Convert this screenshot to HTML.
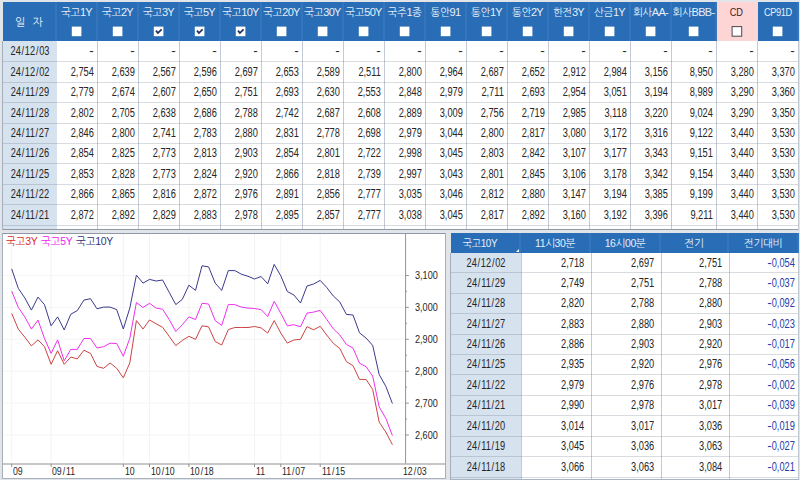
<!DOCTYPE html>
<html lang="ko"><head><meta charset="utf-8"><title>채권 수익률</title>
<style>
html,body{margin:0;padding:0}
body{width:800px;height:480px;overflow:hidden;position:relative;background:#e1e4e8;font-family:"Liberation Sans","NanumGothic","Noto Sans CJK KR",sans-serif;font-size:10.5px;color:#262626}
.abs{position:absolute}
.t1{position:absolute;left:3px;top:2px;width:796px;height:227px;background:#fff;overflow:hidden}
.hd{position:absolute;top:0;height:39px;background:#286db5;color:#e6effa;text-align:center;box-sizing:border-box;border-right:2px solid #3475bb}
.hd .nm{position:absolute;left:-10px;right:-10px;top:4px;line-height:12px;white-space:nowrap;letter-spacing:-0.4px}
.cb{position:absolute;left:0;top:0}
.c{position:absolute;height:20px;line-height:20px;text-align:right;box-sizing:border-box;padding-right:5.6px;white-space:nowrap;font-size:12.5px;transform:scaleX(.74);transform-origin:100% 50%}
.d{position:absolute;height:20px;line-height:20px;text-align:center;white-space:nowrap;font-size:12.5px;transform:scaleX(.74);transform-origin:50% 50%}
.ds{display:inline-block;transform:scaleX(1.45);transform-origin:100% 50%}
.lat{display:inline-block;transform:scaleX(.88)}
.lt{font-size:11px;letter-spacing:-0.7px}
.ax{position:absolute;line-height:12px;font-size:11.5px;white-space:nowrap;transform:scaleX(.76);transform-origin:0 50%}
.sl{margin:0 1.2px}
.d .sl{margin:0 1px}
.vl{position:absolute;width:1px;background:#c3cad6}
.hl{position:absolute;height:1px;background:rgba(100,110,130,.25)}
.neg{color:#2a3aa8}
</style></head><body>

<div class="t1">
<div class="abs" style="left:0;top:39px;width:54px;height:190px;background:#d6e2ee"></div>
<div class="hd" style="left:0;width:54px"><div class="nm" style="top:14px;letter-spacing:0.3px;font-size:11px">일&nbsp; 자</div></div>
<div class="hd" style="left:54px;width:41px"><div class="nm">국고<span class="lt">1Y</span></div>
<svg class="cb" width="41" height="39" viewBox="0 0 41 39">
<rect x="14.8" y="24.6" width="9.6" height="9.6" fill="#fff"/>
</svg>
</div>
<div class="hd" style="left:95px;width:41px"><div class="nm">국고<span class="lt">2Y</span></div>
<svg class="cb" width="41" height="39" viewBox="0 0 41 39">
<rect x="14.8" y="24.6" width="9.6" height="9.6" fill="#fff"/>
</svg>
</div>
<div class="hd" style="left:136px;width:41px"><div class="nm">국고<span class="lt">3Y</span></div>
<svg class="cb" width="41" height="39" viewBox="0 0 41 39">
<rect x="14.8" y="24.6" width="9.6" height="9.6" fill="#fff"/>
<polyline points="17.0,28.6 18.9,31.0 22.6,27.3" fill="none" stroke="#1c2f5c" stroke-width="1.7"/>
</svg>
</div>
<div class="hd" style="left:177px;width:41px"><div class="nm">국고<span class="lt">5Y</span></div>
<svg class="cb" width="41" height="39" viewBox="0 0 41 39">
<rect x="14.8" y="24.6" width="9.6" height="9.6" fill="#fff"/>
<polyline points="17.0,28.6 18.9,31.0 22.6,27.3" fill="none" stroke="#1c2f5c" stroke-width="1.7"/>
</svg>
</div>
<div class="hd" style="left:218px;width:41px"><div class="nm">국고<span class="lt">10Y</span></div>
<svg class="cb" width="41" height="39" viewBox="0 0 41 39">
<rect x="14.8" y="24.6" width="9.6" height="9.6" fill="#fff"/>
<polyline points="17.0,28.6 18.9,31.0 22.6,27.3" fill="none" stroke="#1c2f5c" stroke-width="1.7"/>
</svg>
</div>
<div class="hd" style="left:259px;width:41px"><div class="nm">국고<span class="lt">20Y</span></div>
<svg class="cb" width="41" height="39" viewBox="0 0 41 39">
<rect x="14.8" y="24.6" width="9.6" height="9.6" fill="#fff"/>
</svg>
</div>
<div class="hd" style="left:300px;width:41px"><div class="nm">국고<span class="lt">30Y</span></div>
<svg class="cb" width="41" height="39" viewBox="0 0 41 39">
<rect x="14.8" y="24.6" width="9.6" height="9.6" fill="#fff"/>
</svg>
</div>
<div class="hd" style="left:341px;width:41px"><div class="nm">국고<span class="lt">50Y</span></div>
<svg class="cb" width="41" height="39" viewBox="0 0 41 39">
<rect x="14.8" y="24.6" width="9.6" height="9.6" fill="#fff"/>
</svg>
</div>
<div class="hd" style="left:382px;width:41px"><div class="nm">국주<span class="lt">1</span>종</div>
<svg class="cb" width="41" height="39" viewBox="0 0 41 39">
<rect x="14.8" y="24.6" width="9.6" height="9.6" fill="#fff"/>
</svg>
</div>
<div class="hd" style="left:423px;width:41px"><div class="nm">통안<span class="lt">91</span></div>
<svg class="cb" width="41" height="39" viewBox="0 0 41 39">
<rect x="14.8" y="24.6" width="9.6" height="9.6" fill="#fff"/>
</svg>
</div>
<div class="hd" style="left:464px;width:41px"><div class="nm">통안<span class="lt">1Y</span></div>
<svg class="cb" width="41" height="39" viewBox="0 0 41 39">
<rect x="14.8" y="24.6" width="9.6" height="9.6" fill="#fff"/>
</svg>
</div>
<div class="hd" style="left:505px;width:41px"><div class="nm">통안<span class="lt">2Y</span></div>
<svg class="cb" width="41" height="39" viewBox="0 0 41 39">
<rect x="14.8" y="24.6" width="9.6" height="9.6" fill="#fff"/>
</svg>
</div>
<div class="hd" style="left:546px;width:41px"><div class="nm">한전<span class="lt">3Y</span></div>
<svg class="cb" width="41" height="39" viewBox="0 0 41 39">
<rect x="14.8" y="24.6" width="9.6" height="9.6" fill="#fff"/>
</svg>
</div>
<div class="hd" style="left:587px;width:41px"><div class="nm">산금<span class="lt">1Y</span></div>
<svg class="cb" width="41" height="39" viewBox="0 0 41 39">
<rect x="14.8" y="24.6" width="9.6" height="9.6" fill="#fff"/>
</svg>
</div>
<div class="hd" style="left:628px;width:41px"><div class="nm">회사<span class="lt">AA-</span></div>
<svg class="cb" width="41" height="39" viewBox="0 0 41 39">
<rect x="14.8" y="24.6" width="9.6" height="9.6" fill="#fff"/>
</svg>
</div>
<div class="hd" style="left:669px;width:45px"><div class="nm">회사<span class="lt">BBB-</span></div>
<svg class="cb" width="45" height="39" viewBox="0 0 45 39">
<rect x="16.8" y="24.6" width="9.6" height="9.6" fill="#fff"/>
</svg>
</div>
<div class="hd" style="left:714px;width:41px;background:#fdd5d5;color:#4a2222;border-right-color:#fdd5d5"><div class="nm"><span class="lat">CD</span></div>
<svg class="cb" width="41" height="39" viewBox="0 0 41 39">
<rect x="15.1" y="24.6" width="9.6" height="9.6" fill="#fff" stroke="#48484e" stroke-width="1"/>
</svg>
</div>
<div class="hd" style="left:755px;width:41px"><div class="nm"><span class="lat">CP91D</span></div>
<svg class="cb" width="41" height="39" viewBox="0 0 41 39">
<rect x="14.8" y="24.6" width="9.6" height="9.6" fill="#fff"/>
</svg>
</div>
<div class="d" style="left:0;top:39px;width:54px;height:20px;line-height:21.5px">24<span class="sl">/</span>12<span class="sl">/</span>03</div>
<div class="c" style="left:54px;top:39px;width:41px;height:20px;line-height:21.5px"><span class="ds">-</span></div>
<div class="c" style="left:95px;top:39px;width:41px;height:20px;line-height:21.5px"><span class="ds">-</span></div>
<div class="c" style="left:136px;top:39px;width:41px;height:20px;line-height:21.5px"><span class="ds">-</span></div>
<div class="c" style="left:177px;top:39px;width:41px;height:20px;line-height:21.5px"><span class="ds">-</span></div>
<div class="c" style="left:218px;top:39px;width:41px;height:20px;line-height:21.5px"><span class="ds">-</span></div>
<div class="c" style="left:259px;top:39px;width:41px;height:20px;line-height:21.5px"><span class="ds">-</span></div>
<div class="c" style="left:300px;top:39px;width:41px;height:20px;line-height:21.5px"><span class="ds">-</span></div>
<div class="c" style="left:341px;top:39px;width:41px;height:20px;line-height:21.5px"><span class="ds">-</span></div>
<div class="c" style="left:382px;top:39px;width:41px;height:20px;line-height:21.5px"><span class="ds">-</span></div>
<div class="c" style="left:423px;top:39px;width:41px;height:20px;line-height:21.5px"><span class="ds">-</span></div>
<div class="c" style="left:464px;top:39px;width:41px;height:20px;line-height:21.5px"><span class="ds">-</span></div>
<div class="c" style="left:505px;top:39px;width:41px;height:20px;line-height:21.5px"><span class="ds">-</span></div>
<div class="c" style="left:546px;top:39px;width:41px;height:20px;line-height:21.5px"><span class="ds">-</span></div>
<div class="c" style="left:587px;top:39px;width:41px;height:20px;line-height:21.5px"><span class="ds">-</span></div>
<div class="c" style="left:628px;top:39px;width:41px;height:20px;line-height:21.5px"><span class="ds">-</span></div>
<div class="c" style="left:669px;top:39px;width:45px;height:20px;line-height:21.5px"><span class="ds">-</span></div>
<div class="c" style="left:714px;top:39px;width:41px;height:20px;line-height:21.5px"><span class="ds">-</span></div>
<div class="c" style="left:755px;top:39px;width:41px;height:20px;line-height:21.5px"><span class="ds">-</span></div>
<div class="d" style="left:0;top:59px;width:54px;height:21px;line-height:22.5px">24<span class="sl">/</span>12<span class="sl">/</span>02</div>
<div class="c" style="left:54px;top:59px;width:41px;height:21px;line-height:22.5px">2,754</div>
<div class="c" style="left:95px;top:59px;width:41px;height:21px;line-height:22.5px">2,639</div>
<div class="c" style="left:136px;top:59px;width:41px;height:21px;line-height:22.5px">2,567</div>
<div class="c" style="left:177px;top:59px;width:41px;height:21px;line-height:22.5px">2,596</div>
<div class="c" style="left:218px;top:59px;width:41px;height:21px;line-height:22.5px">2,697</div>
<div class="c" style="left:259px;top:59px;width:41px;height:21px;line-height:22.5px">2,653</div>
<div class="c" style="left:300px;top:59px;width:41px;height:21px;line-height:22.5px">2,589</div>
<div class="c" style="left:341px;top:59px;width:41px;height:21px;line-height:22.5px">2,511</div>
<div class="c" style="left:382px;top:59px;width:41px;height:21px;line-height:22.5px">2,800</div>
<div class="c" style="left:423px;top:59px;width:41px;height:21px;line-height:22.5px">2,964</div>
<div class="c" style="left:464px;top:59px;width:41px;height:21px;line-height:22.5px">2,687</div>
<div class="c" style="left:505px;top:59px;width:41px;height:21px;line-height:22.5px">2,652</div>
<div class="c" style="left:546px;top:59px;width:41px;height:21px;line-height:22.5px">2,912</div>
<div class="c" style="left:587px;top:59px;width:41px;height:21px;line-height:22.5px">2,984</div>
<div class="c" style="left:628px;top:59px;width:41px;height:21px;line-height:22.5px">3,156</div>
<div class="c" style="left:669px;top:59px;width:45px;height:21px;line-height:22.5px">8,950</div>
<div class="c" style="left:714px;top:59px;width:41px;height:21px;line-height:22.5px">3,280</div>
<div class="c" style="left:755px;top:59px;width:41px;height:21px;line-height:22.5px">3,370</div>
<div class="d" style="left:0;top:80px;width:54px;height:20px;line-height:21.5px">24<span class="sl">/</span>11<span class="sl">/</span>29</div>
<div class="c" style="left:54px;top:80px;width:41px;height:20px;line-height:21.5px">2,779</div>
<div class="c" style="left:95px;top:80px;width:41px;height:20px;line-height:21.5px">2,674</div>
<div class="c" style="left:136px;top:80px;width:41px;height:20px;line-height:21.5px">2,607</div>
<div class="c" style="left:177px;top:80px;width:41px;height:20px;line-height:21.5px">2,650</div>
<div class="c" style="left:218px;top:80px;width:41px;height:20px;line-height:21.5px">2,751</div>
<div class="c" style="left:259px;top:80px;width:41px;height:20px;line-height:21.5px">2,693</div>
<div class="c" style="left:300px;top:80px;width:41px;height:20px;line-height:21.5px">2,630</div>
<div class="c" style="left:341px;top:80px;width:41px;height:20px;line-height:21.5px">2,553</div>
<div class="c" style="left:382px;top:80px;width:41px;height:20px;line-height:21.5px">2,848</div>
<div class="c" style="left:423px;top:80px;width:41px;height:20px;line-height:21.5px">2,979</div>
<div class="c" style="left:464px;top:80px;width:41px;height:20px;line-height:21.5px">2,711</div>
<div class="c" style="left:505px;top:80px;width:41px;height:20px;line-height:21.5px">2,693</div>
<div class="c" style="left:546px;top:80px;width:41px;height:20px;line-height:21.5px">2,954</div>
<div class="c" style="left:587px;top:80px;width:41px;height:20px;line-height:21.5px">3,051</div>
<div class="c" style="left:628px;top:80px;width:41px;height:20px;line-height:21.5px">3,194</div>
<div class="c" style="left:669px;top:80px;width:45px;height:20px;line-height:21.5px">8,989</div>
<div class="c" style="left:714px;top:80px;width:41px;height:20px;line-height:21.5px">3,290</div>
<div class="c" style="left:755px;top:80px;width:41px;height:20px;line-height:21.5px">3,360</div>
<div class="d" style="left:0;top:100px;width:54px;height:21px;line-height:22.5px">24<span class="sl">/</span>11<span class="sl">/</span>28</div>
<div class="c" style="left:54px;top:100px;width:41px;height:21px;line-height:22.5px">2,802</div>
<div class="c" style="left:95px;top:100px;width:41px;height:21px;line-height:22.5px">2,705</div>
<div class="c" style="left:136px;top:100px;width:41px;height:21px;line-height:22.5px">2,638</div>
<div class="c" style="left:177px;top:100px;width:41px;height:21px;line-height:22.5px">2,686</div>
<div class="c" style="left:218px;top:100px;width:41px;height:21px;line-height:22.5px">2,788</div>
<div class="c" style="left:259px;top:100px;width:41px;height:21px;line-height:22.5px">2,742</div>
<div class="c" style="left:300px;top:100px;width:41px;height:21px;line-height:22.5px">2,687</div>
<div class="c" style="left:341px;top:100px;width:41px;height:21px;line-height:22.5px">2,608</div>
<div class="c" style="left:382px;top:100px;width:41px;height:21px;line-height:22.5px">2,889</div>
<div class="c" style="left:423px;top:100px;width:41px;height:21px;line-height:22.5px">3,009</div>
<div class="c" style="left:464px;top:100px;width:41px;height:21px;line-height:22.5px">2,756</div>
<div class="c" style="left:505px;top:100px;width:41px;height:21px;line-height:22.5px">2,719</div>
<div class="c" style="left:546px;top:100px;width:41px;height:21px;line-height:22.5px">2,985</div>
<div class="c" style="left:587px;top:100px;width:41px;height:21px;line-height:22.5px">3,118</div>
<div class="c" style="left:628px;top:100px;width:41px;height:21px;line-height:22.5px">3,220</div>
<div class="c" style="left:669px;top:100px;width:45px;height:21px;line-height:22.5px">9,024</div>
<div class="c" style="left:714px;top:100px;width:41px;height:21px;line-height:22.5px">3,290</div>
<div class="c" style="left:755px;top:100px;width:41px;height:21px;line-height:22.5px">3,350</div>
<div class="d" style="left:0;top:121px;width:54px;height:20px;line-height:21.5px">24<span class="sl">/</span>11<span class="sl">/</span>27</div>
<div class="c" style="left:54px;top:121px;width:41px;height:20px;line-height:21.5px">2,846</div>
<div class="c" style="left:95px;top:121px;width:41px;height:20px;line-height:21.5px">2,800</div>
<div class="c" style="left:136px;top:121px;width:41px;height:20px;line-height:21.5px">2,741</div>
<div class="c" style="left:177px;top:121px;width:41px;height:20px;line-height:21.5px">2,783</div>
<div class="c" style="left:218px;top:121px;width:41px;height:20px;line-height:21.5px">2,880</div>
<div class="c" style="left:259px;top:121px;width:41px;height:20px;line-height:21.5px">2,831</div>
<div class="c" style="left:300px;top:121px;width:41px;height:20px;line-height:21.5px">2,778</div>
<div class="c" style="left:341px;top:121px;width:41px;height:20px;line-height:21.5px">2,698</div>
<div class="c" style="left:382px;top:121px;width:41px;height:20px;line-height:21.5px">2,979</div>
<div class="c" style="left:423px;top:121px;width:41px;height:20px;line-height:21.5px">3,044</div>
<div class="c" style="left:464px;top:121px;width:41px;height:20px;line-height:21.5px">2,800</div>
<div class="c" style="left:505px;top:121px;width:41px;height:20px;line-height:21.5px">2,817</div>
<div class="c" style="left:546px;top:121px;width:41px;height:20px;line-height:21.5px">3,080</div>
<div class="c" style="left:587px;top:121px;width:41px;height:20px;line-height:21.5px">3,172</div>
<div class="c" style="left:628px;top:121px;width:41px;height:20px;line-height:21.5px">3,316</div>
<div class="c" style="left:669px;top:121px;width:45px;height:20px;line-height:21.5px">9,122</div>
<div class="c" style="left:714px;top:121px;width:41px;height:20px;line-height:21.5px">3,440</div>
<div class="c" style="left:755px;top:121px;width:41px;height:20px;line-height:21.5px">3,530</div>
<div class="d" style="left:0;top:141px;width:54px;height:20px;line-height:21.5px">24<span class="sl">/</span>11<span class="sl">/</span>26</div>
<div class="c" style="left:54px;top:141px;width:41px;height:20px;line-height:21.5px">2,854</div>
<div class="c" style="left:95px;top:141px;width:41px;height:20px;line-height:21.5px">2,825</div>
<div class="c" style="left:136px;top:141px;width:41px;height:20px;line-height:21.5px">2,773</div>
<div class="c" style="left:177px;top:141px;width:41px;height:20px;line-height:21.5px">2,813</div>
<div class="c" style="left:218px;top:141px;width:41px;height:20px;line-height:21.5px">2,903</div>
<div class="c" style="left:259px;top:141px;width:41px;height:20px;line-height:21.5px">2,854</div>
<div class="c" style="left:300px;top:141px;width:41px;height:20px;line-height:21.5px">2,801</div>
<div class="c" style="left:341px;top:141px;width:41px;height:20px;line-height:21.5px">2,722</div>
<div class="c" style="left:382px;top:141px;width:41px;height:20px;line-height:21.5px">2,998</div>
<div class="c" style="left:423px;top:141px;width:41px;height:20px;line-height:21.5px">3,045</div>
<div class="c" style="left:464px;top:141px;width:41px;height:20px;line-height:21.5px">2,803</div>
<div class="c" style="left:505px;top:141px;width:41px;height:20px;line-height:21.5px">2,842</div>
<div class="c" style="left:546px;top:141px;width:41px;height:20px;line-height:21.5px">3,107</div>
<div class="c" style="left:587px;top:141px;width:41px;height:20px;line-height:21.5px">3,177</div>
<div class="c" style="left:628px;top:141px;width:41px;height:20px;line-height:21.5px">3,343</div>
<div class="c" style="left:669px;top:141px;width:45px;height:20px;line-height:21.5px">9,151</div>
<div class="c" style="left:714px;top:141px;width:41px;height:20px;line-height:21.5px">3,440</div>
<div class="c" style="left:755px;top:141px;width:41px;height:20px;line-height:21.5px">3,530</div>
<div class="d" style="left:0;top:161px;width:54px;height:21px;line-height:22.5px">24<span class="sl">/</span>11<span class="sl">/</span>25</div>
<div class="c" style="left:54px;top:161px;width:41px;height:21px;line-height:22.5px">2,853</div>
<div class="c" style="left:95px;top:161px;width:41px;height:21px;line-height:22.5px">2,828</div>
<div class="c" style="left:136px;top:161px;width:41px;height:21px;line-height:22.5px">2,773</div>
<div class="c" style="left:177px;top:161px;width:41px;height:21px;line-height:22.5px">2,824</div>
<div class="c" style="left:218px;top:161px;width:41px;height:21px;line-height:22.5px">2,920</div>
<div class="c" style="left:259px;top:161px;width:41px;height:21px;line-height:22.5px">2,866</div>
<div class="c" style="left:300px;top:161px;width:41px;height:21px;line-height:22.5px">2,818</div>
<div class="c" style="left:341px;top:161px;width:41px;height:21px;line-height:22.5px">2,739</div>
<div class="c" style="left:382px;top:161px;width:41px;height:21px;line-height:22.5px">2,997</div>
<div class="c" style="left:423px;top:161px;width:41px;height:21px;line-height:22.5px">3,043</div>
<div class="c" style="left:464px;top:161px;width:41px;height:21px;line-height:22.5px">2,801</div>
<div class="c" style="left:505px;top:161px;width:41px;height:21px;line-height:22.5px">2,845</div>
<div class="c" style="left:546px;top:161px;width:41px;height:21px;line-height:22.5px">3,106</div>
<div class="c" style="left:587px;top:161px;width:41px;height:21px;line-height:22.5px">3,178</div>
<div class="c" style="left:628px;top:161px;width:41px;height:21px;line-height:22.5px">3,342</div>
<div class="c" style="left:669px;top:161px;width:45px;height:21px;line-height:22.5px">9,154</div>
<div class="c" style="left:714px;top:161px;width:41px;height:21px;line-height:22.5px">3,440</div>
<div class="c" style="left:755px;top:161px;width:41px;height:21px;line-height:22.5px">3,530</div>
<div class="d" style="left:0;top:182px;width:54px;height:20px;line-height:21.5px">24<span class="sl">/</span>11<span class="sl">/</span>22</div>
<div class="c" style="left:54px;top:182px;width:41px;height:20px;line-height:21.5px">2,866</div>
<div class="c" style="left:95px;top:182px;width:41px;height:20px;line-height:21.5px">2,865</div>
<div class="c" style="left:136px;top:182px;width:41px;height:20px;line-height:21.5px">2,816</div>
<div class="c" style="left:177px;top:182px;width:41px;height:20px;line-height:21.5px">2,872</div>
<div class="c" style="left:218px;top:182px;width:41px;height:20px;line-height:21.5px">2,976</div>
<div class="c" style="left:259px;top:182px;width:41px;height:20px;line-height:21.5px">2,891</div>
<div class="c" style="left:300px;top:182px;width:41px;height:20px;line-height:21.5px">2,856</div>
<div class="c" style="left:341px;top:182px;width:41px;height:20px;line-height:21.5px">2,777</div>
<div class="c" style="left:382px;top:182px;width:41px;height:20px;line-height:21.5px">3,035</div>
<div class="c" style="left:423px;top:182px;width:41px;height:20px;line-height:21.5px">3,046</div>
<div class="c" style="left:464px;top:182px;width:41px;height:20px;line-height:21.5px">2,812</div>
<div class="c" style="left:505px;top:182px;width:41px;height:20px;line-height:21.5px">2,880</div>
<div class="c" style="left:546px;top:182px;width:41px;height:20px;line-height:21.5px">3,147</div>
<div class="c" style="left:587px;top:182px;width:41px;height:20px;line-height:21.5px">3,194</div>
<div class="c" style="left:628px;top:182px;width:41px;height:20px;line-height:21.5px">3,385</div>
<div class="c" style="left:669px;top:182px;width:45px;height:20px;line-height:21.5px">9,199</div>
<div class="c" style="left:714px;top:182px;width:41px;height:20px;line-height:21.5px">3,440</div>
<div class="c" style="left:755px;top:182px;width:41px;height:20px;line-height:21.5px">3,530</div>
<div class="d" style="left:0;top:202px;width:54px;height:21px;line-height:22.5px">24<span class="sl">/</span>11<span class="sl">/</span>21</div>
<div class="c" style="left:54px;top:202px;width:41px;height:21px;line-height:22.5px">2,872</div>
<div class="c" style="left:95px;top:202px;width:41px;height:21px;line-height:22.5px">2,892</div>
<div class="c" style="left:136px;top:202px;width:41px;height:21px;line-height:22.5px">2,829</div>
<div class="c" style="left:177px;top:202px;width:41px;height:21px;line-height:22.5px">2,883</div>
<div class="c" style="left:218px;top:202px;width:41px;height:21px;line-height:22.5px">2,978</div>
<div class="c" style="left:259px;top:202px;width:41px;height:21px;line-height:22.5px">2,895</div>
<div class="c" style="left:300px;top:202px;width:41px;height:21px;line-height:22.5px">2,857</div>
<div class="c" style="left:341px;top:202px;width:41px;height:21px;line-height:22.5px">2,777</div>
<div class="c" style="left:382px;top:202px;width:41px;height:21px;line-height:22.5px">3,038</div>
<div class="c" style="left:423px;top:202px;width:41px;height:21px;line-height:22.5px">3,045</div>
<div class="c" style="left:464px;top:202px;width:41px;height:21px;line-height:22.5px">2,817</div>
<div class="c" style="left:505px;top:202px;width:41px;height:21px;line-height:22.5px">2,892</div>
<div class="c" style="left:546px;top:202px;width:41px;height:21px;line-height:22.5px">3,160</div>
<div class="c" style="left:587px;top:202px;width:41px;height:21px;line-height:22.5px">3,192</div>
<div class="c" style="left:628px;top:202px;width:41px;height:21px;line-height:22.5px">3,396</div>
<div class="c" style="left:669px;top:202px;width:45px;height:21px;line-height:22.5px">9,211</div>
<div class="c" style="left:714px;top:202px;width:41px;height:21px;line-height:22.5px">3,440</div>
<div class="c" style="left:755px;top:202px;width:41px;height:21px;line-height:22.5px">3,530</div>
<div class="vl" style="left:94px;top:39px;height:190px"></div>
<div class="vl" style="left:135px;top:39px;height:190px"></div>
<div class="vl" style="left:176px;top:39px;height:190px"></div>
<div class="vl" style="left:217px;top:39px;height:190px"></div>
<div class="vl" style="left:258px;top:39px;height:190px"></div>
<div class="vl" style="left:299px;top:39px;height:190px"></div>
<div class="vl" style="left:340px;top:39px;height:190px"></div>
<div class="vl" style="left:381px;top:39px;height:190px"></div>
<div class="vl" style="left:422px;top:39px;height:190px"></div>
<div class="vl" style="left:463px;top:39px;height:190px"></div>
<div class="vl" style="left:504px;top:39px;height:190px"></div>
<div class="vl" style="left:545px;top:39px;height:190px"></div>
<div class="vl" style="left:586px;top:39px;height:190px"></div>
<div class="vl" style="left:627px;top:39px;height:190px"></div>
<div class="vl" style="left:668px;top:39px;height:190px"></div>
<div class="vl" style="left:713px;top:39px;height:190px"></div>
<div class="vl" style="left:754px;top:39px;height:190px"></div>
<div class="hl" style="left:0;top:59px;width:796px"></div>
<div class="hl" style="left:0;top:80px;width:796px"></div>
<div class="hl" style="left:0;top:100px;width:796px"></div>
<div class="hl" style="left:0;top:121px;width:796px"></div>
<div class="hl" style="left:0;top:141px;width:796px"></div>
<div class="hl" style="left:0;top:161px;width:796px"></div>
<div class="hl" style="left:0;top:182px;width:796px"></div>
<div class="hl" style="left:0;top:202px;width:796px"></div>
<div class="hl" style="left:0;top:223px;width:796px"></div>
<div class="hl" style="left:0;top:243px;width:796px"></div>
</div>
<div class="hl" style="left:2px;top:229px;width:797px;background:#8e98a6"></div>
<div class="vl" style="left:2px;top:41px;height:189px;background:#a2afbe"></div>
<div class="vl" style="left:798px;top:41px;height:189px;background:#c0c8d2"></div>
<div class="abs" style="left:2px;top:233px;width:444px;height:246px;background:#fff;border:1px solid #a6aeb8;border-top-color:#8e98a6;border-right-color:#a8aeb6;border-bottom-color:#a8b2be;box-sizing:border-box"></div>
<svg class="abs" style="left:0;top:0" width="800" height="480" viewBox="0 0 800 480">
<line x1="11.7" y1="234" x2="11.7" y2="463" stroke="#f3f3f3" stroke-width="1"/>
<line x1="51.1" y1="234" x2="51.1" y2="463" stroke="#f3f3f3" stroke-width="1"/>
<line x1="123.3" y1="234" x2="123.3" y2="463" stroke="#f3f3f3" stroke-width="1"/>
<line x1="149.5" y1="234" x2="149.5" y2="463" stroke="#f3f3f3" stroke-width="1"/>
<line x1="188.9" y1="234" x2="188.9" y2="463" stroke="#f3f3f3" stroke-width="1"/>
<line x1="254.5" y1="234" x2="254.5" y2="463" stroke="#f3f3f3" stroke-width="1"/>
<line x1="280.8" y1="234" x2="280.8" y2="463" stroke="#f3f3f3" stroke-width="1"/>
<line x1="320.2" y1="234" x2="320.2" y2="463" stroke="#f3f3f3" stroke-width="1"/>
<line x1="3" y1="275.5" x2="405" y2="275.5" stroke="#f5f5f5" stroke-width="1"/>
<line x1="3" y1="307.4" x2="405" y2="307.4" stroke="#f5f5f5" stroke-width="1"/>
<line x1="3" y1="339.3" x2="405" y2="339.3" stroke="#f5f5f5" stroke-width="1"/>
<line x1="3" y1="371.2" x2="405" y2="371.2" stroke="#f5f5f5" stroke-width="1"/>
<line x1="3" y1="403.1" x2="405" y2="403.1" stroke="#f5f5f5" stroke-width="1"/>
<line x1="3" y1="435.0" x2="405" y2="435.0" stroke="#f5f5f5" stroke-width="1"/>
<line x1="405.6" y1="234" x2="405.6" y2="464" stroke="#929292" stroke-width="1"/>
<line x1="3" y1="464" x2="445" y2="464" stroke="#b4b4b4" stroke-width="1.5"/>
<line x1="405.6" y1="275.5" x2="408.8" y2="275.5" stroke="#929292" stroke-width="1"/>
<line x1="405.6" y1="291.4" x2="407" y2="291.4" stroke="#929292" stroke-width="1"/>
<line x1="405.6" y1="307.4" x2="408.8" y2="307.4" stroke="#929292" stroke-width="1"/>
<line x1="405.6" y1="323.4" x2="407" y2="323.4" stroke="#929292" stroke-width="1"/>
<line x1="405.6" y1="339.3" x2="408.8" y2="339.3" stroke="#929292" stroke-width="1"/>
<line x1="405.6" y1="355.2" x2="407" y2="355.2" stroke="#929292" stroke-width="1"/>
<line x1="405.6" y1="371.2" x2="408.8" y2="371.2" stroke="#929292" stroke-width="1"/>
<line x1="405.6" y1="387.1" x2="407" y2="387.1" stroke="#929292" stroke-width="1"/>
<line x1="405.6" y1="403.1" x2="408.8" y2="403.1" stroke="#929292" stroke-width="1"/>
<line x1="405.6" y1="419.0" x2="407" y2="419.0" stroke="#929292" stroke-width="1"/>
<line x1="405.6" y1="435.0" x2="408.8" y2="435.0" stroke="#929292" stroke-width="1"/>
<line x1="11.7" y1="464" x2="11.7" y2="467" stroke="#929292" stroke-width="1"/>
<line x1="51.1" y1="464" x2="51.1" y2="467" stroke="#929292" stroke-width="1"/>
<line x1="123.3" y1="464" x2="123.3" y2="467" stroke="#929292" stroke-width="1"/>
<line x1="149.5" y1="464" x2="149.5" y2="467" stroke="#929292" stroke-width="1"/>
<line x1="188.9" y1="464" x2="188.9" y2="467" stroke="#929292" stroke-width="1"/>
<line x1="254.5" y1="464" x2="254.5" y2="467" stroke="#929292" stroke-width="1"/>
<line x1="280.8" y1="464" x2="280.8" y2="467" stroke="#929292" stroke-width="1"/>
<line x1="320.2" y1="464" x2="320.2" y2="467" stroke="#929292" stroke-width="1"/>
<polyline points="11.7,313.4 18.3,329.1 24.8,337.2 31.4,345.9 38.0,339.9 44.5,346.7 51.1,364.3 57.6,350.7 64.2,364.3 70.8,357.0 77.3,358.9 83.9,350.2 90.5,353.4 97.0,366.4 103.6,368.3 110.1,362.9 116.7,368.3 123.3,377.8 129.8,362.9 136.4,320.6 143.0,329.0 149.5,320.0 156.1,323.8 162.6,327.3 169.2,336.3 175.8,345.6 182.3,340.4 188.9,336.3 195.5,339.4 202.0,325.8 208.6,326.9 215.2,341.5 221.7,345.0 228.3,329.6 234.8,327.5 241.4,327.5 248.0,327.5 254.5,326.5 261.1,327.9 267.7,333.1 274.2,320.6 280.8,333.1 287.3,343.1 293.9,340.0 300.5,339.3 307.0,326.7 313.6,329.8 320.2,326.3 326.7,335.0 333.3,343.3 339.8,348.5 346.4,361.6 353.0,365.7 359.5,379.4 366.1,379.4 372.7,389.5 379.2,422.2 385.8,432.0 392.4,444.7" fill="none" stroke="#cc4444" stroke-width="1" stroke-linejoin="round"/>
<polyline points="11.7,291.1 18.3,307.4 24.8,316.9 31.4,329.1 38.0,320.1 44.5,338.5 51.1,353.4 57.6,339.9 64.2,360.8 70.8,349.4 77.3,349.4 83.9,338.5 90.5,338.5 97.0,348.0 103.6,346.7 110.1,343.2 116.7,343.5 123.3,356.2 129.8,338.3 136.4,302.5 143.0,307.5 149.5,303.3 156.1,308.1 162.6,309.2 169.2,319.6 175.8,331.5 182.3,324.8 188.9,316.9 195.5,319.6 202.0,303.3 208.6,304.0 215.2,320.6 221.7,325.4 228.3,304.6 234.8,304.6 241.4,307.1 248.0,308.1 254.5,308.5 261.1,309.6 267.7,316.5 274.2,301.3 280.8,313.3 287.3,325.8 293.9,324.7 300.5,326.8 307.0,313.1 313.6,312.1 320.2,310.4 326.7,319.4 333.3,328.8 339.8,335.0 346.4,344.5 353.0,348.0 359.5,363.2 366.1,366.7 372.7,376.2 379.2,406.9 385.8,418.3 392.4,435.5" fill="none" stroke="#ee30ee" stroke-width="1" stroke-linejoin="round"/>
<polyline points="11.7,268.9 18.3,288.4 24.8,297.9 31.4,310.1 38.0,297.1 44.5,304.7 51.1,325.8 57.6,316.9 64.2,329.9 70.8,314.2 77.3,310.6 83.9,300.1 90.5,298.7 97.0,308.8 103.6,307.1 110.1,307.1 116.7,309.6 123.3,329.0 129.8,308.1 136.4,275.2 143.0,283.1 149.5,279.4 156.1,281.0 162.6,280.0 169.2,292.3 175.8,304.6 182.3,299.4 188.9,285.2 195.5,290.4 202.0,265.8 208.6,266.9 215.2,283.1 221.7,290.4 228.3,270.6 234.8,270.6 241.4,274.2 248.0,276.3 254.5,279.0 261.1,276.5 267.7,283.8 274.2,264.4 280.8,275.8 287.3,291.5 293.9,295.0 300.5,303.0 307.0,286.0 313.6,284.0 320.2,280.4 326.7,287.4 333.3,296.0 339.8,302.0 346.4,314.4 353.0,315.0 359.5,332.8 366.1,338.1 372.7,345.4 379.2,374.6 385.8,386.3 392.4,403.5" fill="none" stroke="#3a3a8c" stroke-width="1" stroke-linejoin="round"/>
</svg>
<div class="ax" style="left:13.0px;top:465px">09</div>
<div class="ax" style="left:52.4px;top:465px">09<span class="sl">/</span>11</div>
<div class="ax" style="left:124.6px;top:465px">10</div>
<div class="ax" style="left:150.8px;top:465px">10<span class="sl">/</span>10</div>
<div class="ax" style="left:190.2px;top:465px">10<span class="sl">/</span>18</div>
<div class="ax" style="left:255.8px;top:465px">11</div>
<div class="ax" style="left:282.1px;top:465px">11<span class="sl">/</span>07</div>
<div class="ax" style="left:321.5px;top:465px">11<span class="sl">/</span>15</div>
<div class="ax" style="left:403.0px;top:465px">12<span class="sl">/</span>03</div>
<div class="ax" style="left:415px;top:269.0px;transform:scaleX(.79)">3,100</div>
<div class="ax" style="left:415px;top:300.9px;transform:scaleX(.79)">3,000</div>
<div class="ax" style="left:415px;top:332.8px;transform:scaleX(.79)">2,900</div>
<div class="ax" style="left:415px;top:364.7px;transform:scaleX(.79)">2,800</div>
<div class="ax" style="left:415px;top:396.6px;transform:scaleX(.79)">2,700</div>
<div class="ax" style="left:415px;top:428.5px;transform:scaleX(.79)">2,600</div>
<div class="abs" style="left:6px;top:235px;line-height:12px;letter-spacing:-0.3px;word-spacing:1.2px;white-space:nowrap"><span style="color:#d82a2a">국고3Y</span> <span style="color:#f020f0">국고5Y</span> <span style="color:#30307c">국고10Y</span></div>
<div class="abs" style="left:451px;top:233px;width:348px;height:247px;background:#fff;overflow:hidden">
<div class="abs" style="left:0;top:20px;width:70px;height:230px;background:#d6e2ee"></div>
<div class="hd" style="left:0px;width:70px;height:20px"><div class="nm" style="top:4px;transform:translateX(-5px) scaleX(.95)">국고10Y</div>
<svg class="abs" style="right:0px;bottom:1px" width="3" height="3" viewBox="0 0 3 3"><polygon points="3,0 3,3 0,3" fill="#fff"/></svg>
</div>
<div class="hd" style="left:70px;width:70px;height:20px"><div class="nm" style="top:4px">11시30분</div>
</div>
<div class="hd" style="left:140px;width:70px;height:20px"><div class="nm" style="top:4px">16시00분</div>
</div>
<div class="hd" style="left:210px;width:68px;height:20px"><div class="nm" style="top:4px">전기</div>
</div>
<div class="hd" style="left:278px;width:70px;height:20px"><div class="nm" style="top:4px">전기대비</div>
</div>
<div class="d" style="left:0;top:20px;width:70px;height:19px;line-height:20.5px">24<span class="sl">/</span>12<span class="sl">/</span>02</div>
<div class="c" style="left:70px;top:20px;width:70px;height:19px;line-height:20.5px;padding-right:9.2px">2,718</div>
<div class="c" style="left:140px;top:20px;width:70px;height:19px;line-height:20.5px;padding-right:9.2px">2,697</div>
<div class="c" style="left:210px;top:20px;width:68px;height:19px;line-height:20.5px;padding-right:9.2px">2,751</div>
<div class="c neg" style="left:278px;top:20px;width:70px;height:19px;line-height:20.5px;padding-right:5.6px"><span class="ds">-</span>0,054</div>
<div class="d" style="left:0;top:39px;width:70px;height:21px;line-height:22.5px">24<span class="sl">/</span>11<span class="sl">/</span>29</div>
<div class="c" style="left:70px;top:39px;width:70px;height:21px;line-height:22.5px;padding-right:9.2px">2,749</div>
<div class="c" style="left:140px;top:39px;width:70px;height:21px;line-height:22.5px;padding-right:9.2px">2,751</div>
<div class="c" style="left:210px;top:39px;width:68px;height:21px;line-height:22.5px;padding-right:9.2px">2,788</div>
<div class="c neg" style="left:278px;top:39px;width:70px;height:21px;line-height:22.5px;padding-right:5.6px"><span class="ds">-</span>0,037</div>
<div class="d" style="left:0;top:60px;width:70px;height:20px;line-height:21.5px">24<span class="sl">/</span>11<span class="sl">/</span>28</div>
<div class="c" style="left:70px;top:60px;width:70px;height:20px;line-height:21.5px;padding-right:9.2px">2,820</div>
<div class="c" style="left:140px;top:60px;width:70px;height:20px;line-height:21.5px;padding-right:9.2px">2,788</div>
<div class="c" style="left:210px;top:60px;width:68px;height:20px;line-height:21.5px;padding-right:9.2px">2,880</div>
<div class="c neg" style="left:278px;top:60px;width:70px;height:20px;line-height:21.5px;padding-right:5.6px"><span class="ds">-</span>0,092</div>
<div class="d" style="left:0;top:80px;width:70px;height:21px;line-height:22.5px">24<span class="sl">/</span>11<span class="sl">/</span>27</div>
<div class="c" style="left:70px;top:80px;width:70px;height:21px;line-height:22.5px;padding-right:9.2px">2,883</div>
<div class="c" style="left:140px;top:80px;width:70px;height:21px;line-height:22.5px;padding-right:9.2px">2,880</div>
<div class="c" style="left:210px;top:80px;width:68px;height:21px;line-height:22.5px;padding-right:9.2px">2,903</div>
<div class="c neg" style="left:278px;top:80px;width:70px;height:21px;line-height:22.5px;padding-right:5.6px"><span class="ds">-</span>0,023</div>
<div class="d" style="left:0;top:101px;width:70px;height:20px;line-height:21.5px">24<span class="sl">/</span>11<span class="sl">/</span>26</div>
<div class="c" style="left:70px;top:101px;width:70px;height:20px;line-height:21.5px;padding-right:9.2px">2,886</div>
<div class="c" style="left:140px;top:101px;width:70px;height:20px;line-height:21.5px;padding-right:9.2px">2,903</div>
<div class="c" style="left:210px;top:101px;width:68px;height:20px;line-height:21.5px;padding-right:9.2px">2,920</div>
<div class="c neg" style="left:278px;top:101px;width:70px;height:20px;line-height:21.5px;padding-right:5.6px"><span class="ds">-</span>0,017</div>
<div class="d" style="left:0;top:121px;width:70px;height:20px;line-height:21.5px">24<span class="sl">/</span>11<span class="sl">/</span>25</div>
<div class="c" style="left:70px;top:121px;width:70px;height:20px;line-height:21.5px;padding-right:9.2px">2,935</div>
<div class="c" style="left:140px;top:121px;width:70px;height:20px;line-height:21.5px;padding-right:9.2px">2,920</div>
<div class="c" style="left:210px;top:121px;width:68px;height:20px;line-height:21.5px;padding-right:9.2px">2,976</div>
<div class="c neg" style="left:278px;top:121px;width:70px;height:20px;line-height:21.5px;padding-right:5.6px"><span class="ds">-</span>0,056</div>
<div class="d" style="left:0;top:141px;width:70px;height:21px;line-height:22.5px">24<span class="sl">/</span>11<span class="sl">/</span>22</div>
<div class="c" style="left:70px;top:141px;width:70px;height:21px;line-height:22.5px;padding-right:9.2px">2,979</div>
<div class="c" style="left:140px;top:141px;width:70px;height:21px;line-height:22.5px;padding-right:9.2px">2,976</div>
<div class="c" style="left:210px;top:141px;width:68px;height:21px;line-height:22.5px;padding-right:9.2px">2,978</div>
<div class="c neg" style="left:278px;top:141px;width:70px;height:21px;line-height:22.5px;padding-right:5.6px"><span class="ds">-</span>0,002</div>
<div class="d" style="left:0;top:162px;width:70px;height:20px;line-height:21.5px">24<span class="sl">/</span>11<span class="sl">/</span>21</div>
<div class="c" style="left:70px;top:162px;width:70px;height:20px;line-height:21.5px;padding-right:9.2px">2,990</div>
<div class="c" style="left:140px;top:162px;width:70px;height:20px;line-height:21.5px;padding-right:9.2px">2,978</div>
<div class="c" style="left:210px;top:162px;width:68px;height:20px;line-height:21.5px;padding-right:9.2px">3,017</div>
<div class="c neg" style="left:278px;top:162px;width:70px;height:20px;line-height:21.5px;padding-right:5.6px"><span class="ds">-</span>0,039</div>
<div class="d" style="left:0;top:182px;width:70px;height:21px;line-height:22.5px">24<span class="sl">/</span>11<span class="sl">/</span>20</div>
<div class="c" style="left:70px;top:182px;width:70px;height:21px;line-height:22.5px;padding-right:9.2px">3,014</div>
<div class="c" style="left:140px;top:182px;width:70px;height:21px;line-height:22.5px;padding-right:9.2px">3,017</div>
<div class="c" style="left:210px;top:182px;width:68px;height:21px;line-height:22.5px;padding-right:9.2px">3,036</div>
<div class="c neg" style="left:278px;top:182px;width:70px;height:21px;line-height:22.5px;padding-right:5.6px"><span class="ds">-</span>0,019</div>
<div class="d" style="left:0;top:203px;width:70px;height:20px;line-height:21.5px">24<span class="sl">/</span>11<span class="sl">/</span>19</div>
<div class="c" style="left:70px;top:203px;width:70px;height:20px;line-height:21.5px;padding-right:9.2px">3,045</div>
<div class="c" style="left:140px;top:203px;width:70px;height:20px;line-height:21.5px;padding-right:9.2px">3,036</div>
<div class="c" style="left:210px;top:203px;width:68px;height:20px;line-height:21.5px;padding-right:9.2px">3,063</div>
<div class="c neg" style="left:278px;top:203px;width:70px;height:20px;line-height:21.5px;padding-right:5.6px"><span class="ds">-</span>0,027</div>
<div class="d" style="left:0;top:223px;width:70px;height:21px;line-height:22.5px">24<span class="sl">/</span>11<span class="sl">/</span>18</div>
<div class="c" style="left:70px;top:223px;width:70px;height:21px;line-height:22.5px;padding-right:9.2px">3,066</div>
<div class="c" style="left:140px;top:223px;width:70px;height:21px;line-height:22.5px;padding-right:9.2px">3,063</div>
<div class="c" style="left:210px;top:223px;width:68px;height:21px;line-height:22.5px;padding-right:9.2px">3,084</div>
<div class="c neg" style="left:278px;top:223px;width:70px;height:21px;line-height:22.5px;padding-right:5.6px"><span class="ds">-</span>0,021</div>
<div class="vl" style="left:70px;top:20px;height:230px"></div>
<div class="vl" style="left:140px;top:20px;height:230px"></div>
<div class="vl" style="left:210px;top:20px;height:230px"></div>
<div class="vl" style="left:278px;top:20px;height:230px"></div>
<div class="hl" style="left:0;top:39px;width:348px"></div>
<div class="hl" style="left:0;top:60px;width:348px"></div>
<div class="hl" style="left:0;top:80px;width:348px"></div>
<div class="hl" style="left:0;top:101px;width:348px"></div>
<div class="hl" style="left:0;top:121px;width:348px"></div>
<div class="hl" style="left:0;top:141px;width:348px"></div>
<div class="hl" style="left:0;top:162px;width:348px"></div>
<div class="hl" style="left:0;top:182px;width:348px"></div>
<div class="hl" style="left:0;top:203px;width:348px"></div>
<div class="hl" style="left:0;top:223px;width:348px"></div>
<div class="hl" style="left:0;top:244px;width:348px"></div>
<div class="hl" style="left:0;top:264px;width:348px"></div>
</div>
<div class="vl" style="left:798px;top:253px;height:227px;background:#c0c8d2"></div>
<div class="vl" style="left:450px;top:253px;height:227px;background:#a2afbe"></div>
<div class="hl" style="left:450px;top:479px;width:349px;background:#a8b4c2"></div>
</body></html>
